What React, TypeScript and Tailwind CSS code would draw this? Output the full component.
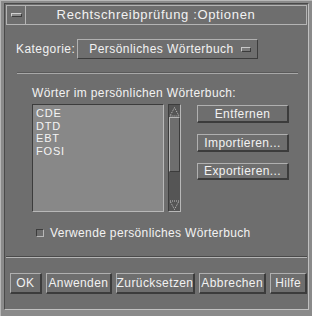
const font = "font-['Liberation_Sans',Arial,sans-serif]"

const words = ["CDE", "DTD", "EBT", "FOSI"]

const footerButtons = [
  { label: "OK", w: "w-[32px]" },
  { label: "Anwenden", w: "w-[67px]" },
  { label: "Zurücksetzen", w: "w-[79px]" },
  { label: "Abbrechen", w: "w-[68px]" },
  { label: "Hilfe", w: "w-[37px]" },
]

function Button({ label, className }: { label: string; className?: string }) {
  return (
    <div
      className={`flex items-center justify-center border-t border-l border-b-2 border-r-2 border-t-[#b0b0b0] border-l-[#b0b0b0] border-b-[#3c3c3c] border-r-[#3c3c3c] bg-[#6e6e6e] text-[12px] leading-[14px] tracking-[0.4px] text-[#f2f2f2] ${className ?? ""}`}
    >
      {label}
    </div>
  )
}

function ArrowUp() {
  return (
    <svg width="11" height="11" viewBox="0 0 11 11">
      <path d="M5.5 1.5 L10 10 L1 10 Z" fill="none" stroke="#c0c0c0" strokeWidth="1" strokeDasharray="1 1" />
    </svg>
  )
}

function ArrowDown() {
  return (
    <svg width="11" height="11" viewBox="0 0 11 11">
      <path d="M1 1 L10 1 L5.5 9.5 Z" fill="none" stroke="#c0c0c0" strokeWidth="1" strokeDasharray="1 1" />
    </svg>
  )
}

export default function App() {
  return (
    <div className={`${font} h-[316px] w-[312px] border-t border-l border-t-[#b8b8b8] border-l-[#b8b8b8] bg-[#8a8a8a] px-[3px] pt-[2px] pb-[3px]`}>
      <div className="flex h-[307px] w-[305px] flex-col border border-t-[#4a4a4a] border-l-[#4a4a4a] border-b-[#c0c0c0] border-r-[#c0c0c0] bg-[#6e6e6e] p-px">
        {/* title bar */}
        <div className="flex h-[20px] border border-[#b4b4b4] bg-[#6e6e6e]">
          <div className="flex w-[19px] items-center justify-center border-r border-[#b4b4b4]">
            <div className="h-[4px] w-[11px] border-t border-l border-b border-r border-t-[#d0d0d0] border-l-[#d0d0d0] border-b-[#3c3c3c] border-r-[#3c3c3c] bg-[#8a8a8a]" />
          </div>
          <div className="flex flex-1 items-center justify-center pr-[20px] text-[13px] tracking-[0.65px] text-[#f2f2f2]">
            Rechtschreibprüfung :Optionen
          </div>
        </div>

        {/* content */}
        <div className="flex flex-1 flex-col px-[10px]">
          <div className="mt-[14px] flex h-[20px] items-center">
            <span className="text-[12px] tracking-[0.45px] text-[#f2f2f2]">Kategorie:</span>
            <div className="ml-[2px] flex h-[20px] w-[181px] items-center border-t border-l border-b border-r border-t-[#b0b0b0] border-l-[#b0b0b0] border-b-[#3c3c3c] border-r-[#3c3c3c] pl-[11px] pr-[6px] text-[12px] tracking-[0.45px] text-[#f2f2f2]">
              <span className="flex-1">Persönliches Wörterbuch</span>
              <div className="h-[5px] w-[10px] border-t border-l border-b border-r border-t-[#c8c8c8] border-l-[#c8c8c8] border-b-[#3c3c3c] border-r-[#3c3c3c] bg-[#7a7a7a]" />
            </div>
          </div>

          <div className="mt-[13px] ml-px h-[2px] w-[281px] border-t border-b border-t-[#5a5a5a] border-b-[#a8a8a8]" />

          <div className="mt-[13px] ml-[16px] text-[12px] leading-[13px] tracking-[0.35px] text-[#f2f2f2]">
            Wörter im persönlichen Wörterbuch:
          </div>

          <div className="mt-[4px] ml-[16px] flex">
            <div className="h-[108px] w-[132px] border-t border-l border-b border-r border-t-[#3c3c3c] border-l-[#3c3c3c] border-b-[#b8b8b8] border-r-[#b8b8b8] bg-[#888888] pl-[3px] pt-[2px]">
              {words.map((w) => (
                <div key={w} className="h-[12.7px] text-[11px] leading-[13px] tracking-[0.8px] text-[#f4f4f4]">
                  {w}
                </div>
              ))}
            </div>
            <div className="ml-[4px] flex h-[108px] w-[13px] flex-col border-t border-l border-b border-r border-t-[#3c3c3c] border-l-[#3c3c3c] border-b-[#b8b8b8] border-r-[#b8b8b8] bg-[#555555]">
              <div className="flex h-[12px] items-center justify-center">
                <ArrowUp />
              </div>
              <div className="h-[55px] border-t border-l border-b border-r border-t-[#b8b8b8] border-l-[#b8b8b8] border-b-[#3c3c3c] border-r-[#3c3c3c] bg-[#6e6e6e]" />
              <div className="flex-1" />
              <div className="flex h-[12px] items-center justify-center">
                <ArrowDown />
              </div>
            </div>
            <div className="ml-[16px] flex flex-col">
              <Button label="Entfernen" className="mt-px h-[18px] w-[92px]" />
              <Button label="Importieren..." className="mt-[11px] h-[18px] w-[92px]" />
              <Button label="Exportieren..." className="mt-[11px] h-[17px] w-[92px]" />
            </div>
          </div>

          <div className="mt-[14px] ml-[20px] flex items-center">
            <div className="h-[8px] w-[8px] border-t border-l border-b border-r border-t-[#3c3c3c] border-l-[#3c3c3c] border-b-[#b8b8b8] border-r-[#b8b8b8] bg-[#6e6e6e]" />
            <span className="ml-[6px] text-[12px] leading-[14px] tracking-[0.35px] text-[#f2f2f2]">
              Verwende persönliches Wörterbuch
            </span>
          </div>
        </div>

        {/* separator */}
        <div className="h-[2px] w-full border-t border-b border-t-[#4a4a4a] border-b-[#b4b4b4]" />

        {/* footer */}
        <div className="flex h-[50px] items-start gap-[4px] pt-[15px] pl-[4px]">
          {footerButtons.map((b) => (
            <Button key={b.label} label={b.label} className={`h-[21px] ${b.w}`} />
          ))}
        </div>
      </div>
    </div>
  )
}
